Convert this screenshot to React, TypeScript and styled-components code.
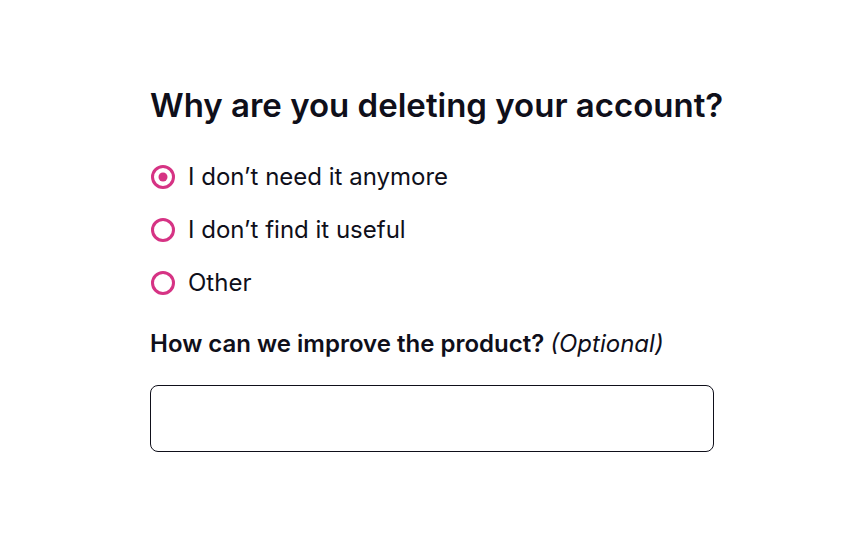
import styled, { createGlobalStyle } from "styled-components";
import { useState } from "react";

const GlobalStyle = createGlobalStyle`
  html, body {
    margin: 0;
    padding: 0;
    background: #fff;
    font-family: Inter, "Noto Sans", sans-serif;
    color: #0f0f1a;
  }
`;

const Page = styled.div`
  width: 864px;
  height: 540px;
  box-sizing: border-box;
  padding: 85px 150px 0 150px;
`;

const Form = styled.form`
  display: flex;
  flex-direction: column;
  width: 564px;
`;

const Title = styled.h1`
  margin: 0;
  font-size: 33px;
  font-weight: 600;
  line-height: 40px;
  white-space: nowrap;
`;

const Options = styled.div`
  display: flex;
  flex-direction: column;
  gap: 17px;
  margin-top: 34px;
`;

const Option = styled.label`
  display: flex;
  align-items: center;
  gap: 13px;
  height: 36px;
  font-size: 24px;
  line-height: 36px;
  cursor: pointer;
`;

const HiddenInput = styled.input`
  position: absolute;
  opacity: 0;
  width: 0;
  height: 0;
`;

const Circle = styled.span<{ $checked: boolean }>`
  position: relative;
  box-sizing: border-box;
  width: 24px;
  height: 24px;
  margin-left: 1px;
  border: 3px solid #d63384;
  border-radius: 50%;
  flex-shrink: 0;

  &::after {
    content: "";
    position: absolute;
    top: 50%;
    left: 50%;
    width: 9px;
    height: 9px;
    border-radius: 50%;
    background: #d63384;
    transform: translate(-50%, -50%);
    display: ${(p) => (p.$checked ? "block" : "none")};
  }
`;

const FieldLabel = styled.label`
  margin-top: 27px;
  font-size: 24px;
  font-weight: 600;
  line-height: 32px;
  white-space: nowrap;
`;

const Optional = styled.span`
  font-weight: 400;
  font-style: italic;
`;

const TextBox = styled.textarea`
  margin-top: 25px;
  box-sizing: border-box;
  width: 564px;
  height: 67px;
  border: 1.5px solid #0f0f1a;
  border-radius: 8px;
  padding: 12px 14px;
  font-family: inherit;
  font-size: 20px;
  resize: none;
  outline: none;
`;

const reasons = [
  "I don\u2019t need it anymore",
  "I don\u2019t find it useful",
  "Other",
];

export default function App() {
  const [reason, setReason] = useState(0);

  return (
    <>
      <GlobalStyle />
      <Page>
        <Form onSubmit={(e) => e.preventDefault()}>
          <Title>Why are you deleting your account?</Title>
          <Options>
            {reasons.map((r, i) => (
              <Option key={r}>
                <HiddenInput
                  type="radio"
                  name="reason"
                  checked={reason === i}
                  onChange={() => setReason(i)}
                />
                <Circle $checked={reason === i} />
                {r}
              </Option>
            ))}
          </Options>
          <FieldLabel htmlFor="improve">
            How can we improve the product? <Optional>(Optional)</Optional>
          </FieldLabel>
          <TextBox id="improve" />
        </Form>
      </Page>
    </>
  );
}
